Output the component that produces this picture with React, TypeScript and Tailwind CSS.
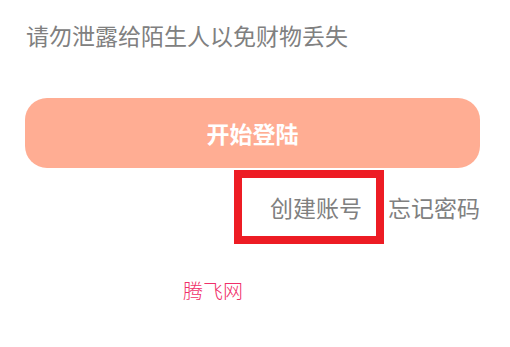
import React from 'react';

const App: React.FC = () => {
  return (
    <div className="w-[510px] h-[347px] bg-white overflow-hidden font-['Noto_Sans_CJK_SC','Noto_Sans',sans-serif]">
      {/* 提示文字 */}
      <p className="pt-[18px] pl-[26px] text-[23px] leading-[34px] text-[#808080]">
        请勿泄露给陌生人以免财物丢失
      </p>

      {/* 登录按钮 */}
      <button
        type="button"
        className="mt-[46px] ml-[25px] w-[455px] h-[70px] rounded-[22px] bg-[#ffad93] flex items-center justify-center text-white text-[23px] font-bold"
      >
        开始登陆
      </button>

      {/* 账号操作 */}
      <div className="mt-[2px] flex justify-end items-center pr-[30px] text-[23px] leading-[34px] text-[#808080]">
        <div className="w-[150px] h-[74px] border-[8px] border-[#ed1c24] flex items-center pl-[28px]">
          创建账号
        </div>
        <span className="ml-[4px]">忘记密码</span>
      </div>

      <p className="mt-[33px] pl-[183px] text-[20px] leading-[28px] font-light text-[#f0306a]">
        腾飞网
      </p>
    </div>
  );
};

export default App;
